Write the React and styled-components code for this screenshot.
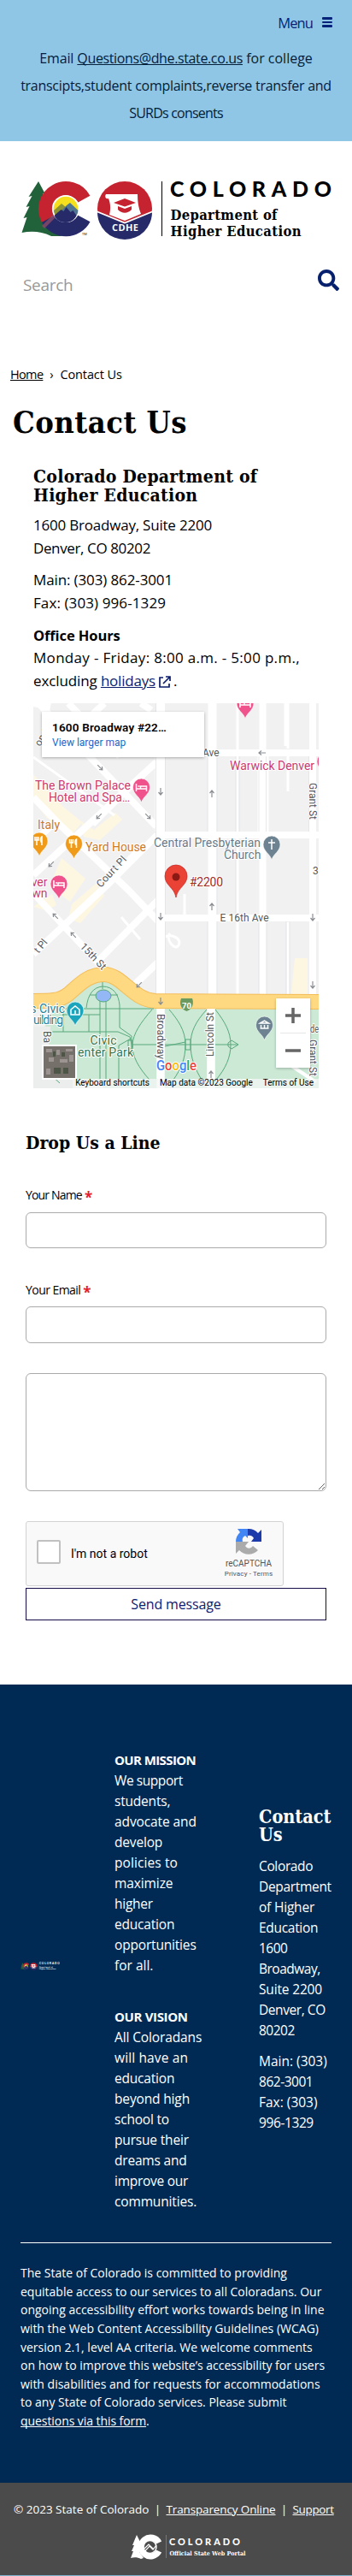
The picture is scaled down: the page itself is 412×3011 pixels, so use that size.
import React from 'react';
import styled, { createGlobalStyle } from 'styled-components';
import { FaSearch } from 'react-icons/fa';

const sans = '"Open Sans", sans-serif';
const slab = '"DejaVu Serif Condensed", "DejaVu Serif", serif';

const GlobalStyle = createGlobalStyle`
  *, *::before, *::after { box-sizing: border-box; }
  body { margin: 0; background: #fff; color: #000; font-family: ${sans}; }
  h1, h2, p { margin: 0; }
  svg { display: block; flex: none; }
`;

const Page = styled.div`
  width: 412px;
  border-bottom: 1px solid #7fb2cc;
`;

const Line = styled.span`
  display: block;
  white-space: nowrap;
  letter-spacing: ${(p) => p.$ls || 0}px;
`;

const Run = styled.span`
  white-space: pre;
  letter-spacing: ${(p) => p.$ls || 0}px;
`;

const Link = styled.a`
  color: ${(p) => p.$color || 'inherit'};
  text-decoration: underline;
  text-decoration-skip-ink: ${(p) => (p.$solid ? 'none' : 'auto')};
  letter-spacing: ${(p) => p.$ls || 0}px;
`;

/* ---------- top banner ---------- */

const Banner = styled.div`
  height: 165px;
  background: #8fc6e6;
`;

const MenuRow = styled.div`
  display: flex;
  justify-content: flex-end;
  align-items: center;
  height: 52px;
  padding: 0 23px 0 0;
  gap: 11px;
  color: #06237c;
  font-size: 16.5px;
`;

const Bars = styled.span`
  display: grid;
  gap: 2px;
  width: 12px;
  i { height: 2.4px; background: #06237c; border-radius: 1px; }
`;

const Notice = styled.p`
  text-align: center;
  font-size: 16px;
  line-height: 32px;
  color: #05203a;
`;

/* ---------- header ---------- */

const Header = styled.header`
  height: 262px;
  padding: 40px 0 0 24px;
`;

const SearchRow = styled.div`
  display: flex;
  justify-content: space-between;
  align-items: flex-start;
  padding: 35px 15px 0 3px;
`;

const SearchText = styled.span`
  margin-top: 3px;
  font-size: 19px;
  line-height: 30px;
  letter-spacing: -0.3px;
  color: #999;
`;

const Crumbs = styled.nav`
  display: flex;
  height: 22px;
  padding-left: 12px;
  font-size: 14.5px;
  line-height: 22px;
`;

const Chevron = styled.span`
  width: 20px;
  text-align: center;
`;

const Title = styled.h1`
  padding: 22px 0 0 15px;
  font: bold 36px/44px ${slab};
  letter-spacing: 0.47px;
`;

/* ---------- contact details ---------- */

const Details = styled.section`
  padding: 31px 0 0 39px;
`;

const SlabHeading = styled.h2`
  font: bold 21px/22px ${slab};
`;

const Para = styled.p`
  padding-top: 11px;
  font-size: 17px;
  line-height: 26.67px;
`;

const Strong = styled.b`
  display: block;
  font-size: 16.5px;
  letter-spacing: -0.1px;
`;

const HolidayLine = styled.span`
  display: flex;
  align-items: center;
  svg { margin: 2px 3px 0 4px; }
`;

const MapBox = styled.div`
  position: relative;
  width: 334px;
  height: 450px;
  margin-top: 12px;
  overflow: hidden;
  font-family: Roboto, sans-serif;
`;

const PlaceCard = styled.div`
  position: absolute;
  left: 10px;
  top: 10px;
  width: 190px;
  height: 53px;
  padding: 10px 12px;
  background: #fff;
  box-shadow: 0 1px 3px rgba(0, 0, 0, 0.3);
`;

const PlaceName = styled.div`
  font-size: 13.5px;
  font-weight: 600;
  line-height: 17px;
  letter-spacing: 0.2px;
`;

const PlaceLink = styled.div`
  font-size: 12px;
  line-height: 18px;
  color: #1a66c9;
`;

const ZoomControl = styled.div`
  position: absolute;
  left: 284px;
  top: 345px;
  width: 40px;
  height: 81px;
  background: #fff;
  box-shadow: 0 1px 3px rgba(0, 0, 0, 0.25);
`;

const MapCredits = styled.div`
  position: absolute;
  right: 0;
  bottom: 0;
  display: flex;
  gap: 12px;
  height: 11px;
  padding: 0 6px 0 3px;
  font-size: 10px;
  line-height: 10px;
  white-space: nowrap;
  background: rgba(245, 245, 245, 0.75);
`;

/* ---------- form ---------- */

const Form = styled.form`
  display: flex;
  flex-direction: column;
  padding: 53px 30px 0 30px;
`;

const Label = styled.label`
  display: flex;
  height: 22px;
  margin-top: ${(p) => p.$top}px;
  font-size: 14px;
  line-height: 22px;
  letter-spacing: ${(p) => p.$ls}px;
  white-space: nowrap;
`;

const Star = styled.b`
  margin: 3px 0 0 3px;
  font-size: 17px;
  color: #e0202c;
`;

const Input = styled.input`
  width: 352px;
  height: 42.5px;
  margin: 8.5px 0 0;
  border: 1px solid #aaa;
  border-radius: 6px;
`;

const Message = styled.textarea`
  width: 352px;
  height: 138px;
  margin: 35px 0 0;
  border: 1px solid #aaa;
  border-radius: 6px;
`;

const Captcha = styled.div`
  display: flex;
  align-items: center;
  width: 302px;
  height: 76px;
  margin-top: 35px;
  padding: 0 12px;
  border: 1px solid #d3d3d3;
  border-radius: 3px;
  background: #f9f9f9;
  font-family: Roboto, sans-serif;
  font-size: 14px;
`;

const Check = styled.span`
  width: 28px;
  height: 28px;
  margin-top: -3px;
  border: 2px solid #c1c1c1;
  border-radius: 2px;
  background: #fff;
`;

const CaptchaText = styled.span`
  flex: 1;
  margin-left: 12px;
`;

const CaptchaBrand = styled.div`
  display: flex;
  flex-direction: column;
  align-items: center;
  width: 56px;
  font-size: 10px;
  line-height: 12px;
  color: #555;
  svg { margin-bottom: 4px; }
  small { font-size: 8px; letter-spacing: 0.15px; white-space: nowrap; }
`;

const Submit = styled.button`
  width: 352px;
  height: 38px;
  margin-top: 2px;
  padding: 0;
  border: 1px solid #150b46;
  background: #fff;
  color: #0c2070;
  font: 16px ${sans};
  letter-spacing: -0.15px;
`;

/* ---------- footer ---------- */

const Footer = styled.footer`
  height: 933px;
  margin-top: 75px;
  padding: 76px 24px 0;
  background: #002a54;
  color: #fff;
`;

const Columns = styled.div`
  display: grid;
  grid-template-columns: 110px 169px 85px;
  height: 576px;
  font-size: 15.5px;
  line-height: 24px;
`;

const Column = styled.div`
  padding-top: ${(p) => p.$top || 0}px;
`;

const ColumnTitle = styled.b`
  display: block;
  margin-top: ${(p) => p.$top || 0}px;
  font-size: 15px;
  letter-spacing: ${(p) => p.$ls}px;
`;

const FooterHeading = styled.h2`
  font: bold 21.5px/21.5px ${slab};
  margin-bottom: 13px;
`;

const Statement = styled.p`
  padding-top: 24.5px;
  border-top: 1px solid #fff;
  font-size: 14px;
  line-height: 21.6px;
`;

const Legal = styled.div`
  height: 108px;
  padding: 20px 0 0 16px;
  background: #4b4b4b;
  color: #fff;
`;

const LegalRow = styled.div`
  display: flex;
  font-size: 13.5px;
  line-height: 22px;
  white-space: nowrap;
`;

const Pipe = styled.span`
  width: ${(p) => p.$w}px;
  text-align: center;
`;

const Portal = styled.div`
  padding: 18px 0 0 137px;
`;

/* ---------- drawings ---------- */

const Logo = ({ width, height, light }) => {
  const ink = light ? '#fff' : '#000';
  return (
    <svg width={width} height={height} viewBox="24 205 366 75">
      <path
        d="M45 212l8 15-3-1 6 12-4-1 8 18 12 21H60c-12-6-24-6-34.500-4l6-18-4 1 7-14-4 1 7-13-4 1z"
        fill="#22623a"
      />
      <circle cx="77" cy="244" r="17" fill={light ? '#002a54' : '#fff'} />
      <path d="M98.200 232.700A24 24 0 0 0 56.200 256" fill="none" stroke="#c4232f" strokeWidth="16.500" />
      <path d="M56.200 256A24 24 0 0 0 98.200 255.300" fill="none" stroke="#262a68" strokeWidth="16.500" />
      <path d="M49 264l18-18 2 4-17 17z" fill="#8d4a68" opacity=".8" />
      <circle cx="77" cy="244" r="15.200" fill="#f6df1d" stroke="#fff" strokeWidth="1.800" />
      <path d="M63 246l9-8 5 4 4-4 10 9a14.300 14.300 0 0 1-28 0z" fill="#8c9434" />
      <path d="M66 252l12-12 4-3 9.500 9a14.500 14.500 0 0 1-27 6z" fill="#4f7593" />
      <path d="M64.500 251l7-6 3 2 3-5 5 6 3-2 4 6a14.500 14.500 0 0 1-26 0z" fill="#262a68" />
      <circle cx="146" cy="244" r="32" fill="#c4232f" />
      <path d="M114 248l32 13 32-13a32 32 0 0 1-64 0z" fill="#262a68" />
      <path d="M114 247.500l32 13 32-13" fill="none" stroke="#fff" strokeWidth="1.800" />
      <path d="M124 227h37c0 9 1 16 4 23l-19 8-18-7c2-8 1-14-1-19-3 1-5-2-3-5z" fill="#fff" />
      <path d="M146 232l13 5-13 4.500-13-4.500zM138 241l8 3 8-3v4c-5 5-11 5-16 0z" fill="#c4232f" />
      <text x="131" y="269.500" fontFamily="Open Sans" fontWeight="700" fontSize="11" fill="#fff" textLength="31">
        CDHE
      </text>
      {!light && (
        <text x="96" y="275" fontFamily="Open Sans" fontSize="4" fill="#000">
          TM
        </text>
      )}
      <path d="M189.500 212v64" stroke={ink} strokeWidth="1" />
      <text x="199" y="230" fontFamily="Lato" fontWeight="900" fontSize="25" fill={ink} textLength="189">
        COLORADO
      </text>
      <g fontFamily="DejaVu Serif Condensed, DejaVu Serif" fontWeight="700" fontSize="16.500" fill={ink}>
        <text x="199.500" y="257" textLength="125">Department of</text>
        <text x="199.500" y="275.700" textLength="153">Higher Education</text>
      </g>
    </svg>
  );
};

const PortalLogo = () => (
  <svg width="137" height="31" viewBox="0 0 137 31">
    <path d="M7 1l4 8-1 12 5 7-3 1c-4-2-8-2-12-1l3-8H1l3-7H2z" fill="#fff" />
    <path d="M33 10A11 11 0 1 0 33 20" fill="none" stroke="#fff" strokeWidth="7" />
    <circle cx="22.500" cy="15" r="7.500" fill="#4b4b4b" stroke="#fff" strokeWidth="1.500" />
    <path d="M13 24l9-10 4 4 4-5M16 17l5-5 6 6" fill="none" stroke="#fff" strokeWidth="1.200" />
    <path d="M41.500 1v27" stroke="#777" />
    <text x="45" y="13" fontFamily="Lato" fontWeight="900" fontSize="11" fill="#fff" textLength="83">
      COLORADO
    </text>
    <text x="45.500" y="25" fontFamily="DejaVu Serif Condensed, DejaVu Serif" fontWeight="700" fontSize="7" fill="#fff" textLength="89" lengthAdjust="spacingAndGlyphs">
      Official State Web Portal
    </text>
  </svg>
);

const External = () => (
  <svg width="14" height="14" viewBox="0 0 14 14" fill="none" stroke="#0c1c6c" strokeWidth="1.700">
    <path d="M5 2H1v11h11V9M8 1h5v5M13 1L5 9" />
  </svg>
);

const Recaptcha = () => (
  <svg width="32" height="32" viewBox="0 0 32 32">
    <path d="M31 16V2l-4 4A15 15 0 0 0 15 1v8c4-1 6 1 7 3l-3 4z" fill="#1c3aa9" />
    <path d="M15 1H3l3 4a15 15 0 0 0-5 11h8c-1-4 1-6 3-7l3 3z" fill="#4285f4" />
    <path d="M1 16v14l4-4a15 15 0 0 0 22 0l-6-5c-3 4-7 3-9 0l4-5z" fill="#ababab" />
  </svg>
);

const Pin = ({ x, y, color, children }) => (
  <g transform={`translate(${x} ${y})`}>
    <path d="M0 18C-2 11-10 8-10 0a10 10 0 0 1 20 0C10 8 2 11 0 18z" fill={color} stroke="#fff" strokeWidth=".6" />
    <g fill="none" stroke="#fff" strokeWidth="1.500">{children}</g>
  </g>
);

const bed = <path d="M-6-4V5M-6 2H6V5M6 2V-1H-1V2M-4-1h2" />;
const fork = <path d="M-3-5v10M-5-5v4h4v-4M3 5v-10c-2 1-2 4-1 6h1" />;

const arrows = [
  [117, 897, 45], [173, 954, 45], [188, 925, 90], [248, 928, -90], [307, 880, 180],
  [116, 954, 135], [60, 1010, 135], [65, 1071, 225], [86, 1093, 225], [188, 1071, 90],
  [248, 1060, -90], [366, 1072, 90], [366, 1151, 90], [163, 1151, 135], [188, 1170, 90], [247, 1256, -90],
];

const CityMap = () => (
  <svg width="334" height="450" viewBox="39 822 334 450">
    <rect x="39" y="822" width="334" height="450" fill="#f1f1f2" />
    <path
      d="M39 905l35 38 22 18-13 16-28-21-16-20zM95 960l15 10 25-20 8 8-26 24-19-4zM72 1003l28 24-18 27-24-18zM84 1057l28-24 10 14-28 32-14-5zM39 1060l22-15 5 13-12 6zM345 1120h15v42h-19z"
      fill="#fdf7e2"
    />
    <g stroke="#fff" fill="none">
      <g strokeWidth="3">
        <path d="M278 822v342M337 822v53M337 884v41M337 1078v86M216 1045v25M334 822v50M303 884v88M313 884v88M183 884v88M142 1072l22 26M148 1092l-12 12M168 985l-38 38M110 965l58-58M39 885l95 68M193 1095c10-4 20 3 16 10s-16-7-10-14" />
      </g>
      <path
        strokeWidth="8"
        d="M39 822l20 4M122 822l-48 46M45 822l72 75 66 69M39 932l34 35 77 73 40 42M39 1023l144-132M39 1115l88-82 57-57M113 1125l74-75M150 1158l40-38M39 1044l88 94M80 822l60 62M165 822l12 8M39 985l28-27"
      />
      <path strokeWidth="10" d="M188 822v450M248.500 822v450" />
      <path strokeWidth="8" d="M307.500 822v342M366 822v450M188 880h185M183 976h190M190 1073h183" />
    </g>
    <g stroke="#e2e3e6" strokeWidth=".8" fill="none">
      <path d="M182.500 822v340M193.500 884v88M193.500 981v88M243 884v88M254 884v88M254 981v88M303 884v88M311.500 884v88M361.500 884v88M193.500 1077v85M243 1077v85M254 1077v85M303 1077v85M312 1077v85M276 884v88M280 884v88M276 981v88M335 1077v85M339 1077v85" />
    </g>
    <path d="M50 1272v-67l15-30c20-14 35-30 55-30s35 22 62 32h191v95z" fill="#cbe9d5" />
    <path d="M39 1200h20l-6 72H39zM50 1262h70v10H50z" fill="#eceded" />
    <path d="M39 1170c20 0 31 0 41-8 13-11 23-23 42-23 21 0 33 30 60 31l191 1" fill="none" stroke="#f3bd59" strokeWidth="18" />
    <path d="M39 1170c20 0 31 0 41-8 13-11 23-23 42-23 21 0 33 30 60 31l191 1" fill="none" stroke="#fed981" strokeWidth="16" />
    <path d="M188 1179v93M247 1179v93" stroke="#fff" strokeWidth="9.500" fill="none" />
    <path d="M340 1245l30 20" stroke="#fff" strokeWidth="4" />
    <g stroke="#58a97c" strokeWidth="1" fill="none">
      <path d="M74 1179h106M58 1206h80l14 6 3 12M73 1186h44M74 1179v27M104 1186v20M117 1170v92M124 1170v92M101 1178c2-16 8-24 19-25 13 0 19 10 20 22v26l14 10v20M139 1262v-40l14-8M178 1180c-14 16-22 28-23 41s8 28 20 41M198 1180c10 12 19 24 19 41s-5 28-14 41M242 1180c-13 14-19 26-19 41s5 28 13 41M252 1180c11 14 18 26 18 41s-6 28-17 41M155 1221h28M193 1221h50M252 1221h27M193 1223l24-5M105 1163h14M128 1163h10M120 1148v8M50 1248l20 18" />
      <path d="M217 1215h6v12h-6zM150 1216h5v10h-5zM267 1219l4-3 8 5-8 5-4-3z" />
    </g>
    <ellipse cx="121" cy="1164" rx="9" ry="7" fill="#94b8f5" stroke="#58a97c" />
    <g fill="none" stroke="#8b8e93" strokeWidth="1.200">
      {arrows.map(([x, y, a]) => (
        <path key={`${x}-${y}`} d="M-4 0H4M1-2.500L4 0L1 2.500" transform={`translate(${x} ${y}) rotate(${a})`} />
      ))}
    </g>
    <Pin x={287} y={822} color="#f0528b">{bed}</Pin>
    <Pin x={165.500} y={920} color="#f0528b">{bed}</Pin>
    <Pin x={69} y={1033} color="#f0528b">{bed}</Pin>
    <Pin x={46} y={983} color="#f09a1a">{fork}</Pin>
    <Pin x={86.500} y={986} color="#f09a1a">{fork}</Pin>
    <Pin x={381} y={890} color="#f0528b" />
    <Pin x={318} y={987} color="#6d8391"><path d="M0-6V6M-4-2H4" /></Pin>
    <Pin x={309.500} y={1198} color="#6d8391"><path d="M-5-2L0-5 5-2zM-4 0v4M0 0v4M4 0v4M-5 4H5" /></Pin>
    <Pin x={88} y={1181} color="#1ba5bd"><path d="M-5-1L0-5 5-1V5H-5zM0 0v4" /></Pin>
    <path d="M206 1049c-2-12-13-14-13-25a13 13 0 0 1 26 0c0 11-11 13-13 25z" fill="#ea4335" stroke="#c5221f" strokeWidth=".7" />
    <circle cx="206" cy="1025" r="4.500" fill="#8c1a14" />
    <path d="M212 1167h13c2 5 1 12-6.500 15-8-3-8.500-10-6.500-15z" fill="#6a9a5f" />
    <text x="213" y="1179" fontFamily="Roboto" fontWeight="700" fontSize="9.500" fill="#fff">70</text>
    <g fontFamily="Roboto" fontSize="14" stroke="#fff" strokeWidth="2" strokeLinejoin="round" paintOrder="stroke">
      <g fill="#c93a71">
        <text x="269" y="900" textLength="99">Warwick Denver</text>
        <text x="41" y="923" textLength="112">The Brown Palace</text>
        <text x="57" y="937" textLength="95">Hotel and Spa…</text>
        <text x="55.500" y="1036" textAnchor="end">ver</text>
        <text x="55.500" y="1049" textAnchor="end">wn</text>
      </g>
      <g fill="#cc7a29">
        <text x="44" y="969">Italy</text>
        <text x="100" y="995" textLength="71">Yard House</text>
      </g>
      <g fill="#6b7985">
        <text x="180" y="990" textLength="125">Central Presbyterian</text>
        <text x="262" y="1004" textLength="43.500">Church</text>
      </g>
      <text x="222" y="1035.500" textLength="39" fill="#a5291f">#2200</text>
      <g fill="#21839a">
        <text x="76" y="1184" textAnchor="end">s Civic</text>
        <text x="74" y="1197" textAnchor="end" textLength="35">uilding</text>
      </g>
      <g fill="#34764f">
        <text x="105.500" y="1221" textLength="31">Civic</text>
        <text x="91" y="1235" textLength="65">enter Park</text>
      </g>
      <g fill="#55585c" fontSize="12">
        <text x="237" y="883.500">Ave</text>
        <text x="257.500" y="1077" textLength="57">E 16th Ave</text>
        <text transform="translate(118 1038) rotate(-47)" textLength="45">Court Pl</text>
        <text transform="translate(93 1107) rotate(46)" textLength="38">15th St</text>
        <text transform="translate(45 1115) rotate(-50)">t Pl</text>
        <text transform="translate(47 873) rotate(-60)">on S</text>
        <text transform="translate(362 915) rotate(90)" textLength="43">Grant St</text>
        <text transform="translate(362 1215) rotate(90)" textLength="43">Grant St</text>
        <text transform="translate(184 1185) rotate(90)" textLength="53">Broadway</text>
        <text transform="translate(250 1235) rotate(-90)" textLength="52">Lincoln St</text>
        <text transform="translate(51 1205) rotate(90)">Ba</text>
        <text x="366" y="1022">3</text>
        <text x="363" y="1207" textLength="10" lengthAdjust="spacingAndGlyphs">de</text>
      </g>
      <text x="183" y="1251" fontSize="16.500" fontWeight="500" textLength="47" lengthAdjust="spacingAndGlyphs">
        <tspan fill="#4285f4">G</tspan>
        <tspan fill="#ea4335">o</tspan>
        <tspan fill="#fbbc05">o</tspan>
        <tspan fill="#4285f4">g</tspan>
        <tspan fill="#34a853">l</tspan>
        <tspan fill="#ea4335">e</tspan>
      </text>
    </g>
    <rect x="50" y="1222" width="39" height="39" fill="#76706b" stroke="#fff" strokeWidth="2" />
    <path d="M54 1226h7v4h-7zM66 1227h4v6h-4zM77 1226h8v3h-8zM57 1236h6v5h-6zM70 1238h9v4h-9zM54 1249h5v7h-5zM81 1233h5v8h-5z" fill="#9c9490" />
    <path d="M63 1248h8v7h-8zM74 1248h6v7h-6zM62 1229h3v6h-3zM72 1230h4v5h-4z" fill="#4d5546" />
  </svg>
);

const missionLines = [
  ['We support', -0.43], ['students,', -0.2], ['advocate and', -0.1], ['develop', -0.17], ['policies to', 0.1],
  ['maximize', -0.1], ['higher', -0.25], ['education', -0.2], ['opportunities', -0.18], ['for all.', 0],
];
const visionLines = [
  ['All Coloradans', -0.12], ['will have an', 0.14], ['education', -0.2], ['beyond high', -0.15], ['school to', -0.2],
  ['pursue their', -0.17], ['dreams and', -0.2], ['improve our', -0.28], ['communities.', -0.15],
];
const addressLines = [
  ['Colorado', -0.36], ['Department', -0.32], ['of Higher', -0.2], ['Education', -0.3], ['1600', -0.5],
  ['Broadway,', -0.5], ['Suite 2200', -0.16], ['Denver, CO', -0.43], ['80202', -0.5],
];
const phoneLines = [['Main: (303)', 0], ['862-3001', -0.48], ['Fax: (303)', 0], ['996-1329', -0.4]];
const statementLines = [
  'The State of Colorado is committed to providing',
  'equitable access to our services to all Coloradans. Our',
  'ongoing accessibility effort works towards being in line',
  'with the Web Content Accessibility Guidelines (WCAG)',
  'version 2.1, level AA criteria. We welcome comments',
  'on how to improve this website’s accessibility for users',
  'with disabilities and for requests for accommodations',
  'to any State of Colorado services. Please submit',
];

const Lines = ({ items }) => items.map(([text, ls], i) => <Line key={i} $ls={ls}>{text}</Line>);

export default function App() {
  return (
    <Page>
      <GlobalStyle />
      <Banner>
        <MenuRow>
          <Run $ls={-0.9}>Menu</Run>
          <Bars><i /><i /><i /></Bars>
        </MenuRow>
        <Notice>
          <Line>
            <Run $ls={-0.1}>Email </Run>
            <Link href="#" $solid $ls={-0.37}>Questions@dhe.state.co.us</Link>
            <Run> for college</Run>
          </Line>
          <Line $ls={-0.27}>transcipts,student complaints,reverse transfer and</Line>
          <Line $ls={-0.78}>SURDs consents</Line>
        </Notice>
      </Banner>

      <Header>
        <Logo width={366} height={75} />
        <SearchRow>
          <SearchText>Search</SearchText>
          <FaSearch size={25} color="#06206e" />
        </SearchRow>
      </Header>

      <Crumbs>
        <Link href="#" $ls={-0.65}>Home</Link>
        <Chevron>›</Chevron>
        <Run $ls={-0.1}>Contact Us</Run>
      </Crumbs>
      <Title>Contact Us</Title>

      <Details>
        <SlabHeading>
          <Line $ls={0.27}>Colorado Department of</Line>
          <Line $ls={0.28}>Higher Education</Line>
        </SlabHeading>
        <Para>
          <Line $ls={-0.21}>1600 Broadway, Suite 2200</Line>
          <Line $ls={-0.38}>Denver, CO 80202</Line>
        </Para>
        <Para>
          <Line $ls={-0.12}>Main: (303) 862-3001</Line>
          <Line $ls={0.1}>Fax: (303) 996-1329</Line>
        </Para>
        <Para>
          <Strong>Office Hours</Strong>
          <Line $ls={0.31}>Monday - Friday: 8:00 a.m. - 5:00 p.m.,</Line>
          <HolidayLine>
            <Run $ls={-0.12}>excluding </Run>
            <Link href="#" $color="#0c1c6c" $ls={-0.21}>holidays</Link>
            <External />.
          </HolidayLine>
        </Para>
        <MapBox>
          <CityMap />
          <PlaceCard>
            <PlaceName>1600 Broadway #22…</PlaceName>
            <PlaceLink>View larger map</PlaceLink>
          </PlaceCard>
          <ZoomControl>
            <svg width="40" height="81" viewBox="0 0 40 81">
              <path d="M20 11v18M11 20h18M11 61h18" stroke="#666" strokeWidth="3.500" />
              <path d="M5 40.500h30" stroke="#e6e6e6" />
            </svg>
          </ZoomControl>
          <MapCredits>
            <span>Keyboard shortcuts</span>
            <span>Map data ©2023 Google</span>
            <span>Terms of Use</span>
          </MapCredits>
        </MapBox>
      </Details>

      <Form>
        <SlabHeading>Drop Us a Line</SlabHeading>
        <Label $top={39.5} $ls={-0.83}>Your Name<Star>*</Star></Label>
        <Input />
        <Label $top={37.5} $ls={-0.55}>Your Email<Star>*</Star></Label>
        <Input />
        <Message />
        <Captcha>
          <Check />
          <CaptchaText>I'm not a robot</CaptchaText>
          <CaptchaBrand>
            <Recaptcha />
            reCAPTCHA
            <small>Privacy - Terms</small>
          </CaptchaBrand>
        </Captcha>
        <Submit type="button">Send message</Submit>
      </Form>

      <Footer>
        <Columns>
          <Column $top={248}>
            <Logo width={46} height={10} light />
          </Column>
          <Column>
            <ColumnTitle $ls={-0.6}>OUR MISSION</ColumnTitle>
            <Lines items={missionLines} />
            <ColumnTitle $top={36} $ls={-0.35}>OUR VISION</ColumnTitle>
            <Lines items={visionLines} />
          </Column>
          <Column $top={68}>
            <FooterHeading>Contact<br />Us</FooterHeading>
            <Lines items={addressLines} />
            <Column $top={12}><Lines items={phoneLines} /></Column>
          </Column>
        </Columns>
        <Statement>
          {statementLines.map((t) => <Line key={t}>{t}</Line>)}
          <Link href="#" $solid $ls={-0.07}>questions via this form</Link>.
        </Statement>
      </Footer>

      <Legal>
        <LegalRow>
          <Run>© 2023 State of Colorado</Run>
          <Pipe $w={20}>|</Pipe>
          <Link href="#" $ls={-0.13}>Transparency Online</Link>
          <Pipe $w={20}>|</Pipe>
          <Link href="#" $ls={-0.35}>Support</Link>
        </LegalRow>
        <Portal><PortalLogo /></Portal>
      </Legal>
    </Page>
  );
}
